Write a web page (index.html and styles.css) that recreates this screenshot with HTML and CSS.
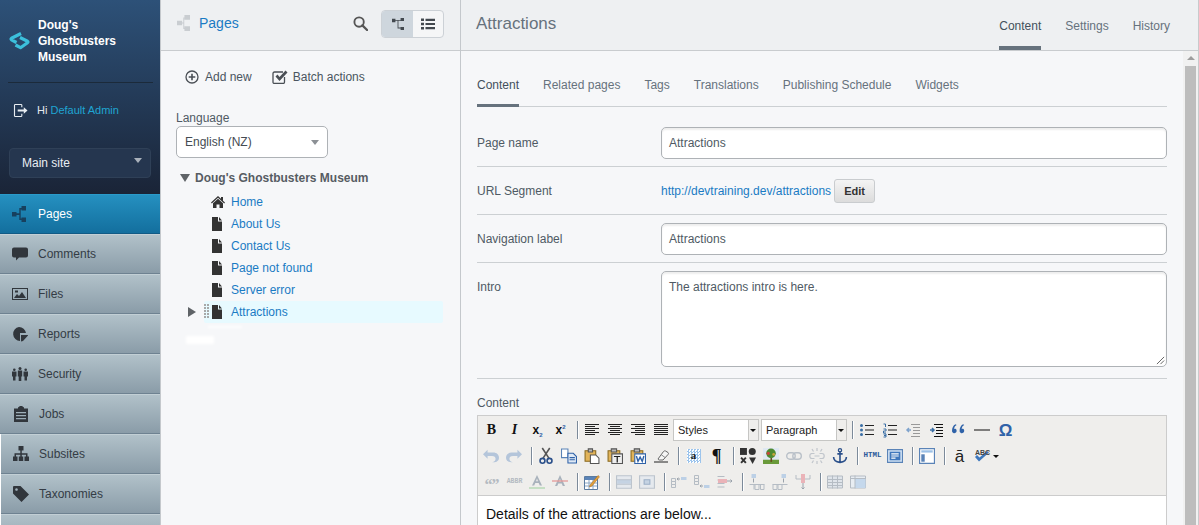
FILE: index.html
```html
<!DOCTYPE html>
<html lang="en">
<head>
<meta charset="utf-8">
<title>Attractions</title>
<link rel="stylesheet" href="styles.css">
</head>
<body>
<svg class="defs" width="0" height="0" aria-hidden="true">
  <symbol id="page" viewBox="0 0 12 14"><path d="M1 0h6v4.500h4V14H1zM8 0l3 3.500H8z"/></symbol>
</svg>
<div class="app">
  <aside class="sidebar">
    <div class="side-head">
      <div class="brand">
        <svg class="logo" viewBox="0 0 22 22"><path d="M13 4.500 3.500 9.300Q2.500 10 3.500 10.800L8.500 13.500M12 8.500l7.500 3.800Q20.500 13 19.500 13.700L12.500 18.700 7.500 16"/></svg>
        <div class="brand-name">Doug's Ghostbusters Museum</div>
      </div>
      <div class="user">
        <svg class="logout" viewBox="0 0 16 16"><path d="M10 4.500V2.500Q10 1 8.500 1H2.500Q1 1 1 2.500v11Q1 15 2.500 15h6q1.500 0 1.500-1.500v-2H8.800v2.300H2.200V2.200h6.600v2.300zM5 7h6.500V4.500L15.500 8l-4 3.500V9H5z"/></svg>
        <span class="hi">Hi <a class="user-link">Default Admin</a></span>
      </div>
      <div class="site-select">Main site<span class="site-caret"></span></div>
    </div>
    <nav class="nav">
      <a class="nav-item active"><svg class="nav-icon" viewBox="0 0 16 16"><path d="M0 6h4.500v4.500H0zM9.500 0H14v4.500H9.500zM9.500 11.500H14V16H9.500zM4.500 7.200h2.800V2h2.200v1.500H8.700v9h.8V14H7.300V9H4.500z"/></svg>Pages</a>
      <a class="nav-item"><svg class="nav-icon" viewBox="0 0 16 16"><path d="M2 1.500h12q2 0 2 2v6q0 2-2 2H7l-3 3v-3H2q-2 0-2-2v-6q0-2 2-2z"/></svg>Comments</a>
      <a class="nav-item"><svg class="nav-icon" viewBox="0 0 16 16"><path fill-rule="evenodd" d="M0 2h16v12H0zM1 3v10h14V3zM2 12l3-4 2 2 3-4 4 6zM3 4.500h3v2H3z"/></svg>Files</a>
      <a class="nav-item"><svg class="nav-icon" viewBox="0 0 16 16"><path d="M7 1a7 7 0 0 1 7 6H8v7.900A7 7 0 0 1 7 1zM9 9h7v.5L11 15l-2 .5z"/></svg>Reports</a>
      <a class="nav-item"><svg class="nav-icon" viewBox="0 0 16 16"><circle cx="2.300" cy="3.700" r="1.300"/><circle cx="8" cy="2.500" r="1.500"/><circle cx="13.700" cy="3.700" r="1.300"/><path d="M0 5.500h4.500v5H3.500v4H1v-4H0zM5.800 4.500h4.400v6H9.300v4.500H6.700v-4.500h-.9zM11.500 5.500H16v5h-1v4h-2.500v-4h-1z"/></svg>Security</a>
      <a class="nav-item shift"><svg class="nav-icon" viewBox="0 0 16 16"><path fill-rule="evenodd" d="M1 2.500h4V1.500L7 0h2l2 1.500v1h4V16H1zM3 6v1.300h10V6zM3 9v1.300h10V9zM3 12v1.300h10V12z"/></svg>Jobs</a>
      <a class="nav-item inset"><svg class="nav-icon" viewBox="0 0 16 16"><path d="M5.500 0h5v4.500h-1.700v2.700h5.700v3.300H16V15h-4.500v-4.500h1.500V8.700H8.800v1.800h1.400V15H5.800v-4.500h1.500V8.700H3v1.800h1.500V15H0v-4.500h1.500V7.200h5.800V4.500H5.500z"/></svg>Subsites</a>
      <a class="nav-item inset"><svg class="nav-icon" viewBox="0 0 16 16"><path fill-rule="evenodd" d="M1 0h6.500L16 8.500 8.500 16 0 7.500V1q0-1 1-1zM3.500 2.200a1.300 1.300 0 1 0 .01 0z"/></svg>Taxonomies</a>
      <a class="nav-item inset"></a>
    </nav>
  </aside>

  <section class="tree-panel">
    <header class="tree-head">
      <svg class="pages-icon" viewBox="0 0 14 17"><path d="M0 6h5.500v5H0zM8 0h6v5H8zM8 12h6v5H8zM5.500 8h1.300V2.500H8v1H7.800v10.500H8v1H6.800V9H5.500z"/></svg>
      <span class="pages-title">Pages</span>
      <svg class="search" viewBox="0 0 16 16"><circle cx="6.500" cy="6.500" r="5" fill="none" stroke="#555" stroke-width="2"/><path d="m10 10 5 5" stroke="#555" stroke-width="2.400" stroke-linecap="round"/></svg>
      <div class="toggle">
        <span class="toggle-btn on"><svg viewBox="0 0 14 14"><path d="M0 1h4v4H0zM10 0h4v3.500h-4zM10 10.500h4V14h-4zM4 2.200h6v1H7.500v8H10v1H6.500V3.200H4z"/></svg></span>
        <span class="toggle-btn"><svg viewBox="0 0 14 12"><path d="M0 .5h3v2.600H0zM0 4.700h3v2.600H0zM0 8.900h3v2.600H0zM4.500.7H14v2.200H4.500zM4.500 4.900H14v2.200H4.500zM4.500 9.100H14v2.200H4.500z"/></svg></span>
      </div>
    </header>
    <div class="tree-body">
      <div class="actions">
        <a class="action"><svg class="a-icon" viewBox="0 0 14 14"><circle cx="7" cy="7" r="6" fill="none" stroke="#4a4f55" stroke-width="1.300"/><path d="M3.700 6.200h2.500V3.700h1.600v2.500h2.500v1.600H7.800v2.500H6.200V7.800H3.700z" fill="#4a4f55"/></svg>Add new</a>
        <a class="action"><svg class="a-icon batch" viewBox="0 0 16 14"><path d="M12.500 7v5q0 1.500-1.500 1.500H2.500Q1 13.500 1 12V3.500Q1 2 2.500 2H11" fill="none" stroke="#4a4f55" stroke-width="1.300"/><path d="m3.500 6.500 2-1.900 2 2.400L13.500.5l2 1.900L7.500 11z" fill="#4a4f55"/></svg>Batch actions</a>
      </div>
      <label class="lang-label">Language</label>
      <div class="lang-select">English (NZ)<span class="lang-caret"></span></div>
      <div class="tree">
        <div class="tree-root"><span class="tri-down"></span>Doug's Ghostbusters Museum</div>
        <div class="tree-row"><svg class="t-icon home" viewBox="0 0 14 12"><path d="M7 0l3 2.800V1h2v3.700L14 6.600 13.200 7.500 7 1.800.8 7.500 0 6.600zM2 7.200 7 2.700l5 4.500V12H8.500V8.500h-3V12H2z"/></svg><a class="t-link">Home</a></div>
        <div class="tree-row"><svg class="t-icon" viewBox="0 0 12 14"><use href="#page"/></svg><a class="t-link">About Us</a></div>
        <div class="tree-row"><svg class="t-icon" viewBox="0 0 12 14"><use href="#page"/></svg><a class="t-link">Contact Us</a></div>
        <div class="tree-row"><svg class="t-icon" viewBox="0 0 12 14"><use href="#page"/></svg><a class="t-link">Page not found</a></div>
        <div class="tree-row"><svg class="t-icon" viewBox="0 0 12 14"><use href="#page"/></svg><a class="t-link">Server error</a></div>
        <div class="tree-row selected"><span class="tri-right"></span><span class="grip"></span><svg class="t-icon" viewBox="0 0 12 14"><use href="#page"/></svg><a class="t-link">Attractions</a></div>
        <div class="ghost"><span class="ghost-a"></span><span class="ghost-b"></span></div>
      </div>
    </div>
  </section>

  <main class="main">
    <header class="main-head">
      <h1 class="main-title">Attractions</h1>
      <div class="main-tabs">
        <a class="main-tab active">Content</a>
        <a class="main-tab">Settings</a>
        <a class="main-tab">History</a>
      </div>
    </header>
    <div class="main-scroll">
      <div class="form">
        <div class="tabs">
          <a class="tab active">Content</a>
          <a class="tab">Related pages</a>
          <a class="tab">Tags</a>
          <a class="tab">Translations</a>
          <a class="tab">Publishing Schedule</a>
          <a class="tab">Widgets</a>
        </div>
        <div class="field first"><span class="f-label">Page name</span><div class="input">Attractions</div></div>
        <div class="field url"><span class="f-label">URL Segment</span><a class="url-link">http://devtraining.dev/attractions</a><span class="edit-btn">Edit</span></div>
        <div class="field"><span class="f-label">Navigation label</span><div class="input">Attractions</div></div>
        <div class="field intro"><span class="f-label">Intro</span><div class="textarea">The attractions intro is here.<svg class="resize" viewBox="0 0 10 10"><path d="M9 1 1 9M9 5 5 9" stroke="#555" fill="none"/></svg></div></div>
        <div class="content-label">Content</div>
        <div class="editor">
          <div class="toolbar">
            <div class="tb-row">
              <span class="btn"><b class="g-b">B</b></span>
              <span class="btn"><i class="g-i">I</i></span>
              <span class="btn"><span class="g-x">x<sub>2</sub></span></span>
              <span class="btn"><span class="g-x">x<sup>2</sup></span></span>
              <span class="sep"></span>
              <span class="btn"><svg viewBox="0 0 14 12"><path d="M0 .5h14M0 2.500h10M0 4.500h14M0 6.500h10M0 8.500h14M0 10.500h10" stroke="#222"/></svg></span>
              <span class="btn"><svg viewBox="0 0 14 12"><path d="M0 .5h14M2 2.500h10M0 4.500h14M2 6.500h10M0 8.500h14M2 10.500h10" stroke="#222"/></svg></span>
              <span class="btn"><svg viewBox="0 0 14 12"><path d="M0 .5h14M4 2.500h10M0 4.500h14M4 6.500h10M0 8.500h14M4 10.500h10" stroke="#222"/></svg></span>
              <span class="btn"><svg viewBox="0 0 14 12"><path d="M0 .5h14M0 2.500h14M0 4.500h14M0 6.500h14M0 8.500h14M0 10.500h14" stroke="#222"/></svg></span>
              <span class="tb-select">Styles<span class="tb-caret"></span></span>
              <span class="tb-select para">Paragraph<span class="tb-caret"></span></span>
              <span class="sep small"></span>
              <span class="btn"><svg viewBox="0 0 14 14"><path d="M5 2.500h9M5 7h9M5 11.500h9" stroke="#222"/><circle cx="1.500" cy="2.500" r="1.500" fill="#3a6ea5"/><circle cx="1.500" cy="7" r="1.500" fill="#3a6ea5"/><circle cx="1.500" cy="11.500" r="1.500" fill="#3a6ea5"/></svg></span>
              <span class="btn"><svg viewBox="0 0 14 14"><path d="M5 2.500h9M5 7h9M5 11.500h9" stroke="#222"/><path d="M.5 1h2v3M.5 6h2.500v2H.5v2H3M.5 11H3v1.500H1M3 12.500V14H.5" stroke="#3a6ea5" fill="none"/></svg></span>
              <span class="btn"><svg viewBox="0 0 14 14"><path d="M5 1.500h9M7 4.500h7M7 7.500h7M7 10.500h7M5 13.500h9" stroke="#999"/><path d="M5 7 1 7M3 5 1 7l2 2" stroke="#7fa3cc" fill="none" stroke-width="1.500"/></svg></span>
              <span class="btn"><svg viewBox="0 0 14 14"><path d="M5 1.500h9M7 4.500h7M7 7.500h7M7 10.500h7M5 13.500h9" stroke="#111"/><path d="M1 7h4M3 5l2 2-2 2" stroke="#3a6ea5" fill="none" stroke-width="1.500"/></svg></span>
              <span class="btn"><svg viewBox="0 0 12 10"><path d="M3 0C1 1 0 3 0 6a2 2 0 1 0 3-2c-.6 0-1 0-1.200.2C2 2.500 2.500 1.500 4 .8zM9.500 0C7.500 1 6.500 3 6.500 6a2 2 0 1 0 3-2c-.6 0-1 0-1.200.2.200-1.700.7-2.700 2.200-3.400z" fill="#2f62a8"/></svg></span>
              <span class="btn"><svg viewBox="0 0 16 2" class="hr"><path d="M0 1h16" stroke="#222" stroke-width="1.100"/></svg></span>
              <span class="btn"><span class="g-omega">Ω</span></span>
            </div>
            <div class="tb-row">
              <span class="btn"><svg viewBox="0 0 14 13"><path d="M4 1 0 5l4 4V6.500h4c2 0 3 1 3 2.500s-1 2.500-3 3h1c3 0 5-1.500 5-4S12 3.500 9 3.500H4z" fill="#b4c5da"/></svg></span>
              <span class="btn"><svg viewBox="0 0 14 13"><path d="M10 1l4 4-4 4V6.500H6c-2 0-3 1-3 2.500s1 2.500 3 3H5C2 12 0 10.500 0 8s2-4.500 5-4.500h5z" fill="#b4c5da"/></svg></span>
              <span class="sep"></span>
              <span class="btn"><svg viewBox="0 0 13 15"><path d="M3 0l6.500 10M10 0 3.500 10" stroke="#555" fill="none" stroke-width="1.500"/><circle cx="3.200" cy="12" r="2.300" fill="none" stroke="#2a4f8a" stroke-width="1.500"/><circle cx="9.800" cy="12" r="2.300" fill="none" stroke="#2a4f8a" stroke-width="1.500"/></svg></span>
              <span class="btn"><svg viewBox="0 0 15 14"><path d="M.5.500h6v8h-6z" fill="#fff" stroke="#5a83b7"/><path d="M6.500 4.500h5l3 3v6h-8z" fill="#dfe9f5" stroke="#2f62a8"/><path d="M8 8.500h5M8 10.500h5" stroke="#2f62a8"/></svg></span>
              <span class="btn"><svg viewBox="0 0 15 15"><path d="M1 2.500h10v10H1z" fill="#e2b45a" stroke="#8a6a20"/><path d="M4 .8h4v3H4z" fill="#bbb" stroke="#555"/><path d="M6 6.500h5l3 3v5H6z" fill="#fff" stroke="#555"/></svg></span>
              <span class="btn"><svg viewBox="0 0 15 15"><path d="M1 2.500h11v10H1z" fill="#e2b45a" stroke="#8a6a20"/><path d="M4 .8h5v3H4z" fill="#bbb" stroke="#555"/><path d="M4.500 5.500h10v9h-10z" fill="#eee" stroke="#555"/><path d="M6.500 7.500h6v1h-2.300v5H9v-5H6.500z" fill="#222"/></svg></span>
              <span class="btn"><svg viewBox="0 0 15 15"><path d="M1 2.500h11v10H1z" fill="#e2b45a" stroke="#8a6a20"/><path d="M4 .8h5v3H4z" fill="#bbb" stroke="#555"/><path d="M4.500 5.500h10v9h-10z" fill="#fff" stroke="#2f62a8"/><path d="M6 7.500l1.500 5 2-4 2 4 1.500-5" fill="none" stroke="#2f62a8" stroke-width="1.300"/></svg></span>
              <span class="btn"><svg viewBox="0 0 16 13"><path d="M5 9.500 10.500 2q1-1 2-.5l2.500 1.500q1 1 0 2L10 10.500H6.500Q5.500 10.500 5 9.500z" fill="#f5f5f5" stroke="#666"/><path d="M1 12.500h14" stroke="#222"/><path d="M8 5l4 3" stroke="#888"/></svg></span>
              <span class="sep"></span>
              <span class="btn"><span class="g-sel">a</span></span>
              <span class="btn"><span class="g-para">¶</span></span>
              <span class="sep"></span>
              <span class="btn"><svg viewBox="0 0 15 15"><path d="M0 0h6.500v6.500H0z" fill="#333"/><circle cx="11.500" cy="3.300" r="3.300" fill="#333"/><path d="M1 9l4.500 5M5.500 9 1 14" stroke="#333" stroke-width="1.800"/><path d="M8.500 9h6.500l-3.200 6z" fill="#333"/></svg></span>
              <span class="btn"><svg viewBox="0 0 15 15"><path d="M0 0h15v15H0z" fill="#dfe8f2"/><path d="M0 11h15v4H0z" fill="#6a9a3a"/><path d="M7 7h1.500v6H7z" fill="#6a4a20"/><circle cx="7.500" cy="5" r="4.500" fill="#4e8a32"/><circle cx="5" cy="5" r="1.500" fill="#c8463a"/><circle cx="10" cy="6" r="1.300" fill="#c8a33a"/></svg></span>
              <span class="btn"><svg viewBox="0 0 16 8"><rect x=".7" y=".7" width="8.500" height="6.500" rx="3.200" fill="none" stroke="#b9c0c8" stroke-width="1.400"/><rect x="6.800" y=".7" width="8.500" height="6.500" rx="3.200" fill="none" stroke="#b9c0c8" stroke-width="1.400"/></svg></span>
              <span class="btn"><svg viewBox="0 0 16 16"><path d="M2 5.500h3.500M2 10.500h3.500M.8 8Q.8 5.500 3 5.500M.8 8Q.8 10.500 3 10.500M10.500 5.500H13Q15.200 5.500 15.200 8T13 10.500h-2.500M5.500 8h5M8 0v3M8 13v3M3 1l1.500 2.500M13 1l-1.500 2.500M3 15l1.500-2.500M13 15l-1.500-2.500" fill="none" stroke="#c0c5cb" stroke-width="1.200"/></svg></span>
              <span class="btn"><svg viewBox="0 0 14 15"><circle cx="7" cy="2" r="1.500" fill="none" stroke="#2a4f8a" stroke-width="1.200"/><path d="M7 3.500V13M4.500 5.500h5M1 8.500Q1 13 7 13.500 13 13 13 8.500" fill="none" stroke="#2a4f8a" stroke-width="1.500"/></svg></span>
              <span class="sep"></span>
              <span class="btn wide"><span class="g-html">HTML</span></span>
              <span class="btn"><svg viewBox="0 0 15 13"><path d="M.5.500h14v12H.5z" fill="#cfe0f3" stroke="#5a83b7"/><path d="M2.500 2.500h10v8h-10z" fill="#3f78bd"/><path d="M4 4.500h7M4 6.500h7M4 8.500h4" stroke="#fff"/></svg></span>
              <span class="sep"></span>
              <span class="btn"><svg viewBox="0 0 14 14"><path d="M.5.500h13v13H.5z" fill="#fff" stroke="#5a83b7"/><path d="M2 2h10v2H2z" fill="#9cc0e6"/><path d="M2 5.500h3v6.500H2z" fill="#5a83b7"/></svg></span>
              <span class="sep"></span>
              <span class="btn"><span class="g-amacr">ā</span></span>
              <span class="btn"><svg viewBox="0 0 16 15"><path d="M1 8.500 5 13 15 4l-2-1.500L5.500 9 3 6.500z" fill="#3f78bd"/><text x="1" y="6" class="abc">ABC</text></svg></span>
              <span class="mini-caret"></span>
            </div>
            <div class="tb-row">
              <span class="btn"><span class="g-dimq">“”</span></span>
              <span class="btn wide"><span class="g-abbr">ABBR</span></span>
              <span class="btn"><svg viewBox="0 0 16 14"><path d="M8 0 3 10.500h2.200L6.300 8h3.400l1.100 2.500H13zM7 6.300l1-2.700 1 2.700z" fill="#a9b2bc" fill-rule="evenodd"/><path d="M0 13h16" stroke="#9ccf9c"/></svg></span>
              <span class="btn"><svg viewBox="0 0 16 14"><path d="M8 0 3 11h2.200L6.300 8.500h3.400l1.100 2.500H13zM7 6.800l1-3 1 3z" fill="#a9b2bc" fill-rule="evenodd"/><path d="M0 6h16" stroke="#e59a9a" stroke-width="1.300"/></svg></span>
              <span class="sep"></span>
              <span class="btn"><svg viewBox="0 0 16 16"><path d="M.5 2.500h13v13H.5z" fill="#fff" stroke="#5a7ba0"/><path d="M1 3h12v3H1z" fill="#5a83b7"/><path d="M1 9h12M1 12h12M5 6v9M9 6v9" stroke="#8aa6c4"/><path d="M6 11 14 1.500l1.500 1.300L8 12l-2.500 1z" fill="#e2a13c" stroke="#a5671a" stroke-width=".5"/></svg></span>
              <span class="sep"></span>
              <span class="btn"><svg viewBox="0 0 14 12"><path d="M.5.500h13v11H.5z" fill="#e5e9ee" stroke="#bcc4cd"/><path d="M1 4h12v3.500H1z" fill="#c5d3e3"/><path d="M0 4h14M0 8h14" stroke="#bcc4cd"/></svg></span>
              <span class="btn"><svg viewBox="0 0 14 12"><path d="M.5.500h13v11H.5z" fill="#e5e9ee" stroke="#bcc4cd"/><path d="M4.500 4h5v4h-5z" fill="#c5d3e3" stroke="#9db1c8"/></svg></span>
              <span class="sep"></span>
              <span class="btn"><svg viewBox="0 0 16 14"><path d="M.5 3.500h4v3h-4zM.5 6.500h4v3h-4zM.5 9.500h4v3h-4z" fill="none" stroke="#b5bcc4"/><path d="M10 2h5.500v3H10z" fill="#bcd0e6"/><path d="M6 4h3M6 4l1.500-1.200M6 4l1.500 1.200" stroke="#9aa2ab" fill="none"/></svg></span>
              <span class="btn"><svg viewBox="0 0 16 14"><path d="M.5 .5h4v3h-4zM.5 3.500h4v3h-4zM.5 6.500h4v3h-4z" fill="none" stroke="#b5bcc4"/><path d="M10 10h5.500v3H10z" fill="#bcd0e6"/><path d="M6 11h3M6 11l1.500-1.200M6 11l1.500 1.200" stroke="#9aa2ab" fill="none"/></svg></span>
              <span class="btn"><svg viewBox="0 0 16 12"><path d="M.5 .5h7M.5 4h7M.5 7.500h7M.5 11h7" stroke="#b5bcc4" fill="none"/><path d="M1 3h9v4H1z" fill="#eab3b8"/><path d="M10 5h5M13.500 3.500 15 5l-1.500 1.500" stroke="#9aa2ab" fill="none"/></svg></span>
              <span class="sep"></span>
              <span class="btn"><svg viewBox="0 0 15 16"><path d="M.5 10.500h4v5M5.500 10.500v5h4v-5M11 10.500v5h3.500v-5" fill="none" stroke="#b5bcc4"/><path d="M0 10.500h15" stroke="#b5bcc4"/><path d="M2 0h4.500v4H2z" fill="#bcd0e6"/><path d="M4 4.500v4" stroke="#9aa2ab"/></svg></span>
              <span class="btn"><svg viewBox="0 0 15 16"><path d="M.5 10.500v5h4v-5M5.500 10.500v5h4v-5M11 10.500h3.500" fill="none" stroke="#b5bcc4"/><path d="M0 10.500h15" stroke="#b5bcc4"/><path d="M9 0h4.500v4H9z" fill="#bcd0e6"/><path d="M11 4.500v4" stroke="#9aa2ab"/></svg></span>
              <span class="btn"><svg viewBox="0 0 15 16"><path d="M.5 1v4h14V1" fill="none" stroke="#b5bcc4"/><path d="M5.500 0h4v9h-4z" fill="#eab3b8"/><path d="M7.500 9v6M6 13.500l1.500 1.500 1.500-1.500" stroke="#9aa2ab" fill="none"/></svg></span>
              <span class="sep"></span>
              <span class="btn"><svg viewBox="0 0 16 13"><path d="M.5.500h15v12H.5z" fill="#dfe4ea" stroke="#b5bcc4"/><path d="M0 4h16M0 7h16M0 10h16M5.500 0v13M10.500 0v13" stroke="#b5bcc4"/></svg></span>
              <span class="btn"><svg viewBox="0 0 16 13"><path d="M.5.500h15v12H.5z" fill="#e8edf2" stroke="#b5bcc4"/><path d="M5 3h10.500v9.500H5z" fill="#c5d8ec"/><path d="M0 3h16M5 0v13" stroke="#b5bcc4"/></svg></span>
            </div>
          </div>
          <div class="editor-body">Details of the attractions are below...</div>
        </div>
      </div>
      <div class="scrollbar"><span class="sb-arrow"></span><span class="sb-thumb"></span></div>
    </div>
  </main>
</div>
</body>
</html>
```

FILE: styles.css
```css
* { box-sizing: border-box; }
html, body { height: 100%; margin: 0; overflow: hidden; }
body { font: 12px/16px "Liberation Sans", Arial, sans-serif; color: #43536d; background: #f6f7f8; }
a { text-decoration: none; }
.defs { position: absolute; }
.app { display: flex; height: 525px; overflow: hidden; }

/* sidebar */
.sidebar { width: 160px; flex: none; display: flex; flex-direction: column; background: #fff; }
.side-head { height: 194px; flex: none; padding: 0 9px 0 8px; background: linear-gradient(#2d5178, #1a2437); }
.brand { display: flex; align-items: center; width: 145px; height: 83px; border-bottom: 1px solid #1b2a3a; }
.logo { width: 22px; height: 22px; fill: none; stroke: #3cc0dc; stroke-width: 3.200; stroke-linejoin: round; flex: none; margin-top: -3px; }
.brand-name { font-weight: 700; color: #fff; line-height: 16px; margin-left: 8px; width: 100px; }
.user { display: flex; align-items: center; height: 54px; color: #dfe6ee; font-size: 11px; padding-left: 5px; }
.logout { width: 15px; height: 15px; fill: #e8edf2; margin-right: 9px; }
.hi { color: #e4e9ef; }
.user-link { color: #1fa5d2; }
.site-select { position: relative; margin-top: 11px; width: 142px; margin-left: 1px; height: 30px; border-radius: 4px; background: #25364f; border: 1px solid #2f4057; color: #e9eef3; line-height: 28px; padding-left: 12px; }
.site-caret { position: absolute; right: 8px; top: 9px; width: 0; height: 0; border-left: 4px solid transparent; border-right: 4px solid transparent; border-top: 5px solid #a9b1bb; }
.nav { flex: 1; display: flex; flex-direction: column; }
.nav-item { height: 40px; flex: none; display: flex; align-items: center; padding: 0 0 0 12px; color: #343c45; background: linear-gradient(#b1c1c9, #8a9ca8); border-top: 1px solid #c2cfd5; border-bottom: 1px solid #6e8291; }
.nav-item.active { background: linear-gradient(#2590c0, #136f9e); color: #fff; border-top-color: #2a9aca; border-bottom-color: #115a85; }
.nav-item.inset { margin-left: 1px; }
.nav-icon { width: 16px; height: 16px; flex: none; margin-right: 10px; fill: #31363c; }
.nav-item.active .nav-icon { fill: #17405e; }
.nav-item.shift { padding-left: 13px; }

/* tree panel */
.tree-panel { width: 301px; flex: none; display: flex; flex-direction: column; border-left: 1px solid #c4c8cc; border-right: 1px solid #c4c8cc; background: #f6f7f9; }
.tree-head { height: 51px; flex: none; display: flex; align-items: center; background: #eef0f2; border-bottom: 1px solid #c9cccf; padding: 0 16px 4px 16px; }
.pages-icon { width: 13px; height: 16px; fill: #c9cdd1; margin-right: 9px; }
.pages-title { font-size: 14px; color: #1a7bc4; flex: 1; }
.search { width: 15px; height: 15px; margin-right: 13px; }
.toggle { display: flex; height: 28px; border: 1px solid #ccd1d6; border-radius: 4px; background: #f5f6f7; margin-top: 2px; overflow: hidden; }
.toggle-btn { width: 31px; display: flex; align-items: center; justify-content: center; }
.toggle-btn + .toggle-btn { width: 30px; }
.toggle-btn.on { background: #ced6dd; }
.toggle-btn svg { width: 14px; height: 12px; fill: #43494f; }
.tree-body { padding: 0 15px; flex: 1; }
.actions { display: flex; height: 51px; align-items: center; padding-left: 9px; }
.action { display: flex; align-items: center; color: #4a5560; margin-right: 20px; }
.a-icon { width: 14px; height: 14px; margin-right: 6px; }
.batch { width: 16px; margin-right: 5px; }
.lang-label { display: block; margin-top: 8px; color: #4f5a64; }
.lang-select { position: relative; width: 152px; height: 32px; background: #fff; border: 1px solid #aeb2b6; border-radius: 5px; line-height: 30px; padding-left: 8px; color: #444b52; }
.lang-caret { position: absolute; right: 8px; top: 13px; width: 0; height: 0; border-left: 4px solid transparent; border-right: 4px solid transparent; border-top: 5px solid #8c9095; }
.tree { margin-top: 10px; position: relative; }
.tree-root { height: 20px; line-height: 20px; display: flex; align-items: center; font-weight: 700; color: #565c63; padding-left: 4px; margin-bottom: 3px; }
.tri-down { width: 0; height: 0; border-left: 5.500px solid transparent; border-right: 5.500px solid transparent; border-top: 8px solid #5f6367; margin-right: 5px; }
.tree-row { position: relative; height: 22px; display: flex; align-items: center; padding-left: 34px; }
.t-icon { width: 12px; height: 14px; fill: #333; flex: none; margin-left: 1px; margin-right: 8px; }
.t-icon.home { width: 14px; height: 12px; margin-left: 1px; margin-right: 6px; }
.t-link { color: #1a7bc4; }
.tree-row.selected { background: #e7faff; margin-left: 28px; padding-left: 6px; border-radius: 2px; width: 239px; }
.tri-right { position: absolute; left: -16px; top: 6px; width: 0; height: 0; border-top: 5.500px solid transparent; border-bottom: 5.500px solid transparent; border-left: 8px solid #5f6367; }
.grip { position: absolute; left: 0; top: 3px; width: 5px; height: 15px; background: conic-gradient(from 270deg at 2px 2px, #a8a8a8 25%, transparent 0) 0 0 / 3px 3px; }
.ghost { position: relative; height: 30px; }
.ghost-a, .ghost-b { position: absolute; background: #fff; filter: blur(1.500px); }
.ghost-a { left: 32px; top: 3px; width: 34px; height: 2px; }
.ghost-b { left: 10px; top: 13px; width: 28px; height: 8px; }

/* main */
.main { flex: 1; min-width: 0; display: flex; flex-direction: column; background: #f6f7f9; border-right: 1px solid #c8cacc; }
.main-head { height: 51px; flex: none; display: flex; justify-content: space-between; background: #eef0f2; border-bottom: 1px solid #c9cccf; padding: 0 28px 0 15px; }
.main-title { margin: 14px 0 0; font-size: 17px; line-height: 20px; font-weight: 400; color: #66727d; }
.main-tabs { display: flex; gap: 24px; }
.main-tab { height: 50px; padding-top: 18px; color: #66727d; }
.main-tab.active { color: #43505c; border-bottom: 4px solid #66727d; }
.main-scroll { flex: 1; display: flex; min-height: 0; overflow: hidden; }
.form { width: 690px; flex: none; margin-left: 16px; }
.tabs { display: flex; gap: 24px; height: 56px; border-bottom: 1px solid #ccd0d3; }
.tab { padding-top: 26px; height: 56px; color: #66727d; }
.tab.active { color: #43505c; border-bottom: 3px solid #66727d; }
.field { display: flex; align-items: flex-start; padding: 8px 0 7px; border-bottom: 1px solid #ccd0d3; height: 48px; color: #4f5a64; }
.field.first { height: 60px; padding-top: 20px; }
.f-label { width: 184px; flex: none; line-height: 32px; }
.intro { height: 116px; }
.input { flex: 1; height: 32px; background: #fff; border: 1px solid #aeb2b6; border-radius: 5px; line-height: 30px; padding-left: 7px; box-shadow: inset 0 2px 2px #eee; }
.url { align-items: center; padding: 0; }
.url .f-label { line-height: 16px; }
.url-link { color: #1a7bc4; }
.edit-btn { margin: 1px 0 0 3px; width: 41px; height: 24px; border: 1px solid #c9cccf; border-radius: 3px; background: linear-gradient(#f4f4f4, #dcdcdc); font-size: 11px; font-weight: 700; color: #333; text-align: center; line-height: 22px; }
.textarea { position: relative; flex: 1; height: 96px; background: #fff; border: 1px solid #aeb2b6; border-radius: 5px; padding: 7px; box-shadow: inset 0 2px 2px #eee; }
.resize { position: absolute; right: 1px; bottom: 1px; width: 9px; height: 9px; }
.content-label { margin-top: 16px; color: #4f5a64; height: 16px; }
.editor { margin-top: 4px; border: 1px solid #ccc; border-bottom: 0; background: #fff; }
.toolbar { background: #efeeec; border-bottom: 1px solid #ccc; padding: 1px 0 0 2px; height: 80px; }
.tb-row { display: flex; align-items: center; height: 26px; }
.btn { width: 23px; height: 22px; flex: none; display: flex; align-items: center; justify-content: center; }
.btn svg { width: 14px; height: 14px; overflow: visible; margin-left: -1px; }
.tb-row + .tb-row .btn svg { width: 16px; height: 16px; }
.btn .hr { height: 2px; width: 16px; }
.sep { width: 9px; flex: none; height: 18px; background: linear-gradient(90deg, transparent 5px, #7c8a9a 5px, #7c8a9a 6px, #fff 6px, #fff 7px, transparent 7px); }
.tb-select { position: relative; width: 86px; height: 22px; flex: none; background: #fff; border: 1px solid #c6c6c4; font-size: 11px; line-height: 20px; padding-left: 4px; color: #222; }
.tb-select.para { margin-left: 2px; }
.tb-caret { position: absolute; right: 0; top: 0; bottom: 0; width: 10px; background: #efeeec; border-left: 1px solid #c6c6c4; }
.tb-caret::after { content: ""; position: absolute; left: 1px; top: 9px; border-left: 3px solid transparent; border-right: 3px solid transparent; border-top: 3px solid #111; }
.mini-caret { width: 0; height: 0; margin-left: -1px; border-left: 3px solid transparent; border-right: 3px solid transparent; border-top: 3px solid #111; }
.g-b { font: 700 14px/1 "Liberation Serif", serif; color: #111; }
.g-i { font: italic 700 14px/1 "Liberation Serif", serif; color: #111; }
.g-x { font: 700 12px/1 "Liberation Sans", sans-serif; color: #111; }
.g-x sub, .g-x sup { font-size: 6px; color: #2f62a8; line-height: 0; }
.g-omega { font: 700 17px/1 "Liberation Sans", sans-serif; color: #2f62a8; }
.g-sel { font: 700 11px/13px "Liberation Serif", serif; width: 14px; height: 14px; text-align: center; color: #222; background: repeating-conic-gradient(#9cc4ec 0 25%, #fff 0 50%) 0 0 / 3px 3px; }
.g-para { font: 700 18px/1 "Liberation Serif", serif; color: #111; }
.g-html { font: 700 7.500px/1 "Liberation Mono", monospace; color: #2a5a9a; }
.g-amacr { font: 17px/1 "Liberation Sans", sans-serif; color: #222; }
.abc { font: 700 7px "Liberation Sans", sans-serif; fill: #444; }
.g-dimq { font: 700 16px/1 "Liberation Serif", serif; color: #b4bac1; letter-spacing: -1px; margin-top: 5px; }
.g-abbr { font: 700 6.500px/1 "Liberation Mono", monospace; color: #b4bac1; }
.editor-body { height: 60px; padding: 9px 8px; font-size: 14px; line-height: 18px; color: #111; background: #fff; }
.scrollbar { flex: none; width: 15px; margin-left: 16px; background: #f1f1f1; display: flex; flex-direction: column; align-items: center; padding-top: 5px; }
.sb-arrow { width: 0; height: 0; border-left: 4px solid transparent; border-right: 4px solid transparent; border-bottom: 4px solid #9d9d9d; margin-bottom: 6px; }
.sb-thumb { width: 11px; flex: 1; background: #bdbdbd; }
```
